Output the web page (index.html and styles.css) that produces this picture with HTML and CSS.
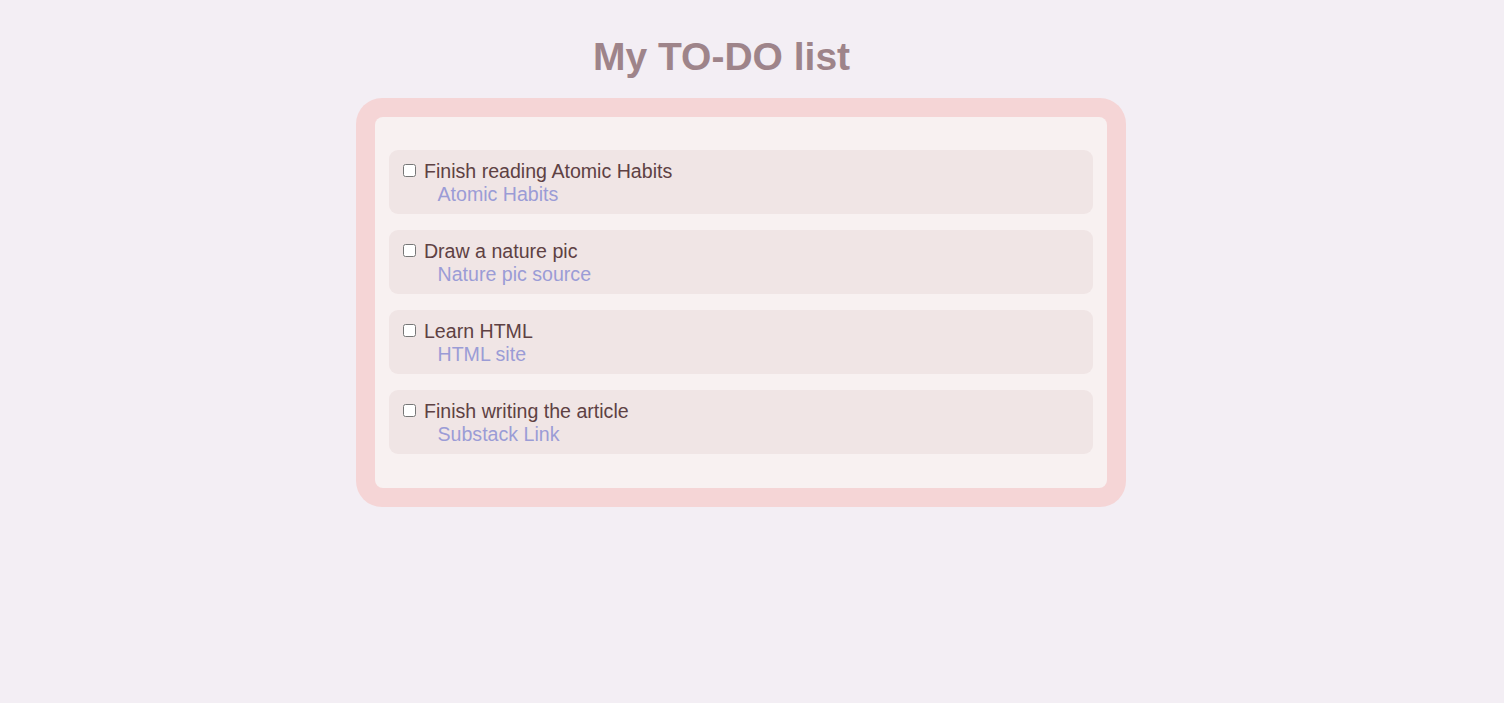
FILE: index.html
```html
<!DOCTYPE html>
<html>
<head>
<meta charset="utf-8">
<title>My TO-DO list</title>
<link rel="stylesheet" href="styles.css">
</head>
<body>
<main class="page">
  <h1 class="title">My TO-DO list</h1>
  <section class="frame">
    <div class="panel">
      <ul class="list">
        <li class="item">
          <label class="task"><input type="checkbox"> Finish reading Atomic Habits</label>
          <a class="link" href="#">Atomic Habits</a>
        </li>
        <li class="item">
          <label class="task"><input type="checkbox"> Draw a nature pic</label>
          <a class="link" href="#">Nature pic source</a>
        </li>
        <li class="item">
          <label class="task"><input type="checkbox"> Learn HTML</label>
          <a class="link" href="#">HTML site</a>
        </li>
        <li class="item">
          <label class="task"><input type="checkbox"> Finish writing the article</label>
          <a class="link" href="#">Substack Link</a>
        </li>
      </ul>
    </div>
  </section>
</main>
</body>
</html>
```
FILE: styles.css
```css
html, body {
  margin: 0;
  padding: 0;
  background: #f3eef4;
  font-family: "Liberation Sans", Arial, sans-serif;
}
.page {
  display: flex;
  flex-direction: column;
  align-items: center;
  padding-top: 34px;
  padding-right: 23px;
}
.title {
  margin: 0 0 18px 0;
  font-size: 39px;
  line-height: 46px;
  font-weight: bold;
  color: #9e848a;
  width: 770px;
  box-sizing: border-box;
  padding-right: 38px;
  text-align: center;
}
.frame {
  width: 770px;
  box-sizing: border-box;
  background: #f5d5d6;
  border-radius: 26px;
  padding: 19px;
}
.panel {
  background: #f8f1f1;
  border-radius: 8px;
  padding: 33px 14px 34px 14px;
}
.list {
  list-style: none;
  margin: 0;
  padding: 0;
  display: flex;
  flex-direction: column;
  gap: 16px;
}
.item {
  background: #f0e5e5;
  border-radius: 9px;
  padding: 10px 14px 8px 10px;
  display: flex;
  flex-direction: column;
  align-items: flex-start;
  font-size: 19.6px;
  line-height: 23px;
  color: #5e4143;
}
.task input {
  margin: 0 3px 0 4px;
  width: 13px;
  height: 13px;
  vertical-align: 1px;
}
.link {
  margin-left: 39px;
  color: #9b9cd6;
  text-decoration: none;
}
```
